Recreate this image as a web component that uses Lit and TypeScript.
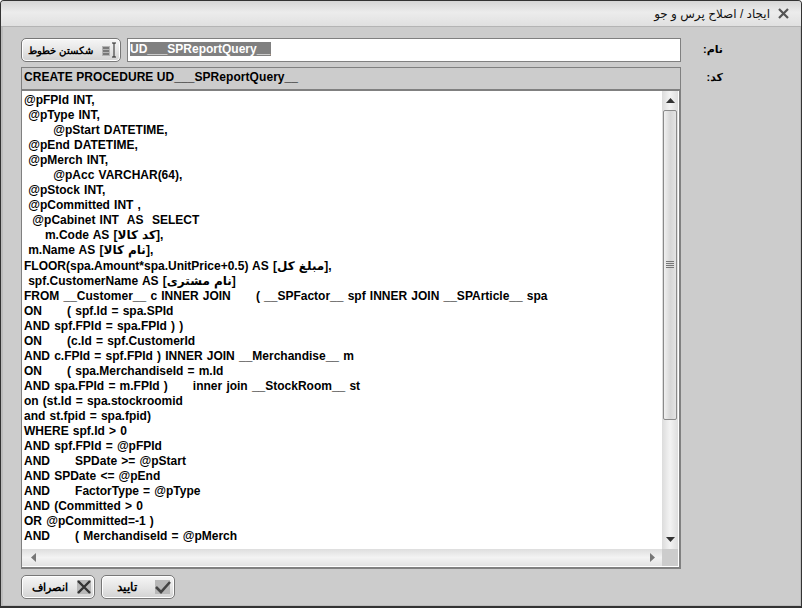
import { LitElement, html, css } from "lit";
import { customElement } from "lit/decorators.js";

const LINES = [
  "@pFPId INT,",
  " @pType INT,",
  "       @pStart DATETIME,",
  " @pEnd DATETIME,",
  " @pMerch INT,",
  "       @pAcc VARCHAR(64),",
  " @pStock INT,",
  " @pCommitted INT ,",
  "  @pCabinet INT  AS  SELECT",
  "     m.Code AS [کد کالا],",
  " m.Name AS [نام کالا],",
  "FLOOR(spa.Amount*spa.UnitPrice+0.5) AS [مبلغ کل],",
  " spf.CustomerName AS [نام مشتری]",
  "FROM __Customer__ c INNER JOIN      ( __SPFactor__ spf INNER JOIN __SPArticle__ spa",
  "ON      ( spf.Id = spa.SPId",
  "AND spf.FPId = spa.FPId ) )",
  "ON      (c.Id = spf.CustomerId",
  "AND c.FPId = spf.FPId ) INNER JOIN __Merchandise__ m",
  "ON      ( spa.MerchandiseId = m.Id",
  "AND spa.FPId = m.FPId )      inner join __StockRoom__ st",
  "on (st.Id = spa.stockroomid",
  "and st.fpid = spa.fpid)",
  "WHERE spf.Id > 0",
  "AND spf.FPId = @pFPId",
  "AND      SPDate >= @pStart",
  "AND SPDate <= @pEnd",
  "AND      FactorType = @pType",
  "AND (Committed > 0",
  "OR @pCommitted=-1 )",
  "AND      ( MerchandiseId = @pMerch",
];

@customElement("app-root")
export class AppRoot extends LitElement {
  static styles = css`
    :host {
      display: block;
      width: 802px;
      height: 608px;
      font-family: "Liberation Sans", "DejaVu Sans", sans-serif;
      font-size: 11px;
      font-weight: 700;
      color: #000;
    }
    .win {
      box-sizing: border-box;
      width: 802px;
      height: 608px;
      display: flex;
      flex-direction: column;
      background: #cccccc;
      border: 1px solid #333;
      border-bottom-width: 2px;
      border-radius: 4px 4px 0 0;
      overflow: hidden;
    }
    .title {
      height: 26px;
      flex: none;
      box-sizing: border-box;
      display: flex;
      direction: rtl;
      align-items: center;
      gap: 8px;
      padding: 0 12px 0 0;
      background: linear-gradient(#d6d6d6, #ececec 45%, #e0e0e0);
      border-bottom: 1px solid #b4b4b4;
      font-size: 12px;
      font-weight: 400;
      color: #111;
    }
    .x { width: 11px; height: 11px; flex: none; }
    .body {
      flex: 1;
      display: grid;
      grid-template-columns: 660px 1fr;
      column-gap: 22px;
      padding: 11px 0 0 18px;
      min-height: 0;
      border-left: 2px solid #bcbcbc;
      border-right: 1px solid #bcbcbc;
      border-bottom: 1px solid #bcbcbc;
    }
    .main {
      width: 660px;
      display: flex;
      flex-direction: column;
    }
    .top { display: flex; gap: 6px; height: 24px; }
    .btn {
      box-sizing: border-box;
      display: flex;
      align-items: center;
      border: 1px solid #777;
      border-radius: 5px;
      background: linear-gradient(#f6f6f6, #e6e6e6 50%, #d2d2d2);
      box-shadow: inset 0 0 0 1px #fff;
      font-family: "Liberation Sans", sans-serif;
      font-size: 11px;
      font-weight: 700;
      color: #000;
      padding: 0;
    }
    .wrap {
      width: 100px;
      direction: rtl;
      justify-content: flex-start;
      gap: 9px;
      padding-right: 3px;
      font-size: 10px;
    }
    .input {
      box-sizing: border-box;
      flex: 1;
      border: 1px solid #808080;
      background: #fff;
      padding: 3px 0 0 2px;
      font-size: 12px;
      line-height: 15px;
    }
    .sel { background: #808080; color: #fff; padding-right: 1px; }
    .head {
      margin-top: 5px;
      height: 24px;
      box-sizing: border-box;
      border: 1px solid #808080;
      border-bottom-width: 2px;
      background: #cccccc;
      padding: 2px 0 0 2px;
      font-size: 12px;
      letter-spacing: 0.06px;
      line-height: 15px;
      white-space: pre;
    }
    .editor {
      box-sizing: border-box;
      width: 660px;
      height: 478px;
      border: 1px solid #808080;
      border-top: none;
      border-right-width: 2px;
      border-bottom-width: 2px;
      background: #fff;
      display: grid;
      grid-template-columns: 1fr 16px;
      grid-template-rows: 1fr 17px;
      padding: 0 1px 1px 0;
    }
    .code {
      overflow: hidden;
      padding: 2px 0 0 2px;
      font-size: 12px;
      word-spacing: 0.85px;
      white-space: pre;
    }
    .line { height: 15.05px; line-height: 15.05px; }
    .vbar {
      display: flex;
      flex-direction: column;
      align-items: center;
      background: linear-gradient(90deg, #dcdcdc, #f3f3f3 50%, #dedede);
    }
    .arrow { flex: none; height: 19px; display: flex; align-items: center; justify-content: center; }
    .thumb {
      box-sizing: border-box;
      width: 14px;
      height: 310px;
      flex: none;
      border: 1px solid #8a8a8a;
      border-radius: 2px;
      background: linear-gradient(90deg, #f0f0f0, #d6d6d6 55%, #e4e4e4);
      display: flex;
      align-items: center;
      justify-content: center;
    }
    .grip { width: 8px; height: 8px; background: repeating-linear-gradient(#777 0 1px, transparent 1px 2px); }
    .spacer { flex: 1; }
    .hbar {
      display: flex;
      align-items: center;
      justify-content: space-between;
      padding: 0 7px 0 9px;
      background: linear-gradient(#dedede, #f3f3f3 50%, #e2e2e2);
    }
    .corner { background: #cccccc; }
    .foot { display: flex; gap: 6px; margin-top: 6px; }
    .foot .btn { width: 74px; height: 24px; justify-content: space-between; }
    .cancel { padding: 0 2px 0 10px !important; }
    .ok { padding: 0 3px 0 15px !important; font-size: 12px !important; }
    .labels {
      direction: rtl;
      display: flex;
      flex-direction: column;
      font-size: 11px;
      padding: 3px 78px 0 0;
      gap: 12px;
      line-height: 16px;
    }
  `;

  render() {
    return html`
      <div class="win">
        <div class="title">
          <svg class="x" viewBox="0 0 11 11"><path d="M1 1 L10 10 M10 1 L1 10" stroke="#555" stroke-width="2.2" fill="none"/></svg>
          <span>ایجاد / اصلاح پرس و جو</span>
        </div>
        <div class="body">
          <div class="main">
            <div class="top">
              <button class="btn wrap">
                <svg width="15" height="16" viewBox="0 0 15 16">
                  <rect x="0" y="4" width="8" height="10" fill="#b4b4b4"/>
                  <path d="M1 6H7M1 9H7M1 12H7" stroke="#666" stroke-width="1.4"/>
                  <path d="M10 1H14M12 1V15M10 15H14" stroke="#222" stroke-width="1" fill="none"/>
                </svg>
                <span>شکستن خطوط</span>
              </button>
              <div class="input"><span class="sel">UD___SPReportQuery__</span></div>
            </div>
            <div class="head">CREATE PROCEDURE UD___SPReportQuery__</div>
            <div class="editor">
              <div class="code">${LINES.map((l) => html`<div class="line">${l}</div>`)}</div>
              <div class="vbar">
                <div class="arrow"><svg width="9" height="5"><path d="M4.5 0L9 5H0Z" fill="#333"/></svg></div>
                <div class="thumb"><div class="grip"></div></div>
                <div class="spacer"></div>
                <div class="arrow"><svg width="9" height="5"><path d="M0 0H9L4.5 5Z" fill="#333"/></svg></div>
              </div>
              <div class="hbar">
                <svg width="5" height="9"><path d="M5 0V9L0 4.5Z" fill="#777"/></svg>
                <svg width="5" height="9"><path d="M0 0V9L5 4.5Z" fill="#777"/></svg>
              </div>
              <div class="corner"></div>
            </div>
            <div class="foot">
              <button class="btn cancel">
                <span>انصراف</span>
                <svg width="16" height="16" viewBox="0 0 16 16"><rect x="1" y="1" width="14" height="14" fill="#b8b8b8"/><path d="M2 2L14 14M14 2L2 14" stroke="#333" stroke-width="2.4"/></svg>
              </button>
              <button class="btn ok">
                <span>تایید</span>
                <svg width="16" height="16" viewBox="0 0 16 16"><rect x="0" y="1" width="15" height="14" fill="#b8b8b8"/><path d="M1 8L6 13L15 3" stroke="#444" stroke-width="2.6" fill="none"/></svg>
              </button>
            </div>
          </div>
          <div class="labels"><div>نام:</div><div>کد:</div></div>
        </div>
      </div>
    `;
  }
}
